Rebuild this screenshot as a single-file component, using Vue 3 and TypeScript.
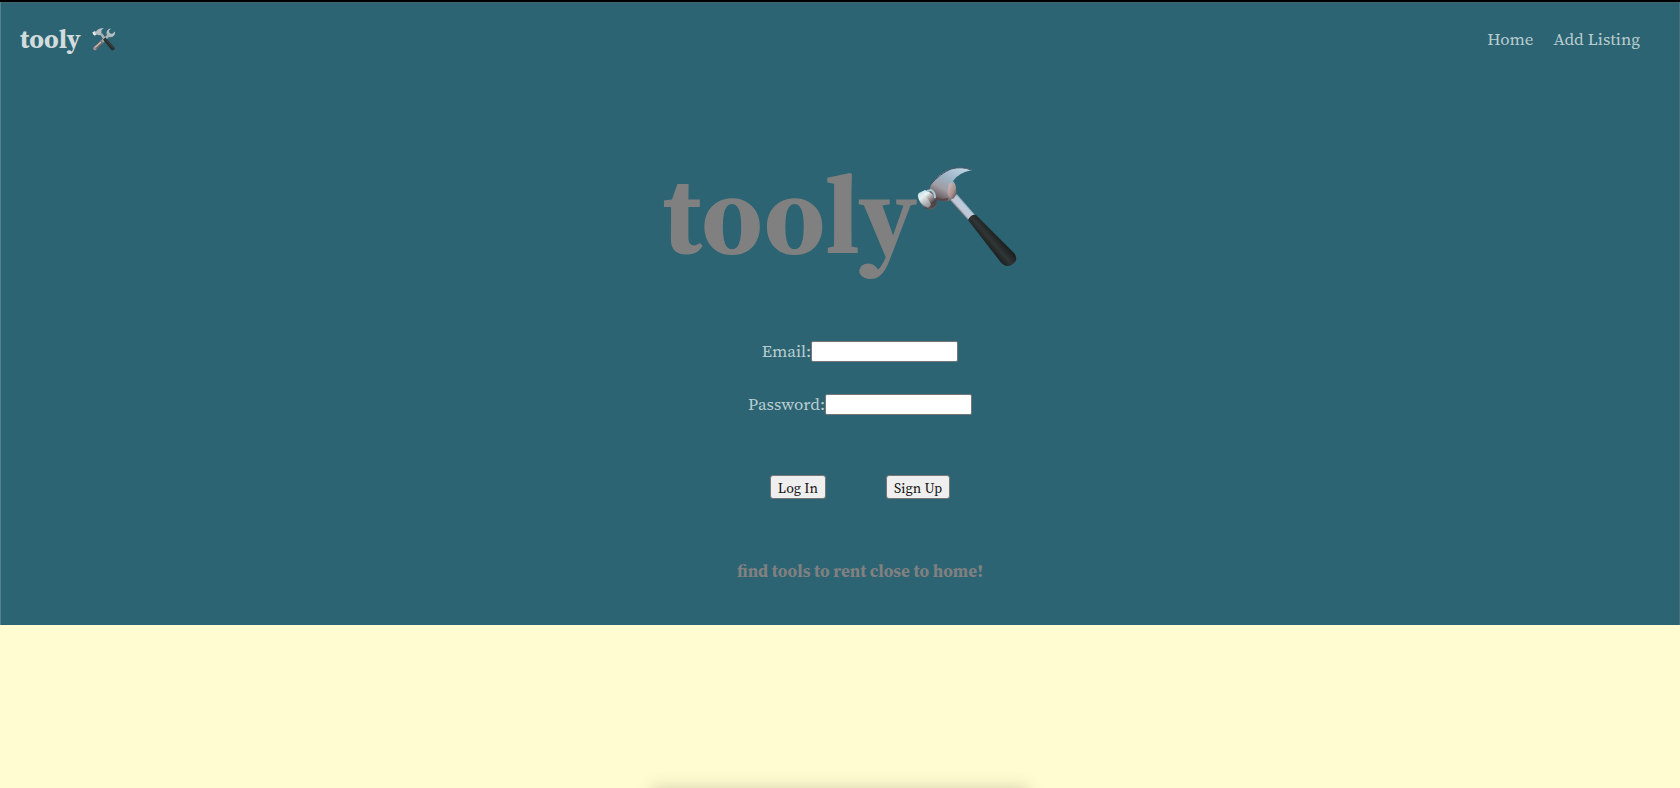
<script setup lang="ts">
import { ref } from 'vue'

interface NavLink {
  label: string
  href: string
}

const links: NavLink[] = [
  { label: 'Home', href: '#home' },
  { label: 'Add Listing', href: '#add-listing' },
]

const email = ref<string>('')
const password = ref<string>('')
</script>

<template>
  <div class="page">
    <div class="panel">
      <header class="bar">
        <a class="brand" href="#home">
          <span>tooly</span>
          <svg class="brand-icon" viewBox="0 0 48 48" aria-hidden="true">
            <defs>
              <linearGradient id="wrench" x1="1" y1="0" x2="0" y2="1">
                <stop offset="0" stop-color="#c3cdd2" />
                <stop offset="0.55" stop-color="#9aa5aa" />
                <stop offset="0.75" stop-color="#5c5553" />
                <stop offset="1" stop-color="#b5aca8" />
              </linearGradient>
            </defs>
            <path
              d="M38 3 C32 3 27 9 30 16 L3 40 Q1 43 4 46 Q7 48 10 44 L34 20 C41 22 47 17 46 9 L40 14 L35 12 L34 7 Z"
              fill="url(#wrench)"
            />
            <path d="M5 40 L18 28 L22 32 L9 44 Z" fill="#6d6260" />
            <path d="M6 41 L18 30" stroke="#c9c0bd" stroke-width="3" />
            <path d="M16 15 L20 12 L29 24 L25 28 Z" fill="#a9b2b5" />
            <path d="M22 25 L27 21 L45 41 Q47 44 43 46 Q40 48 38 45 Z" fill="#292d2e" />
            <path d="M27 24 L43 42" stroke="#4c5050" stroke-width="1.5" />
            <path
              d="M1 11 L5 8 L8 9 Q12 2 23 2 L23 3 Q18 5 19 10 L18 15 Q14 18 10 15 L6 17 Q2 16 1 11 Z"
              fill="#b4bdc1"
            />
            <path d="M1 11 L5 9 L8 15 L5 17 Q2 15 1 11 Z" fill="#e5eaec" />
          </svg>
        </a>
        <nav class="links">
          <a v-for="link in links" :key="link.label" :href="link.href">{{ link.label }}</a>
        </nav>
      </header>

      <main>
        <h1 class="hero">
          <span>tooly</span>
          <svg class="hammer" viewBox="0 0 100 100" aria-hidden="true">
            <defs>
              <linearGradient id="claw" x1="0.9" y1="0" x2="0.25" y2="1">
                <stop offset="0" stop-color="#c0d8e8" />
                <stop offset="0.45" stop-color="#9cb2c3" />
                <stop offset="0.7" stop-color="#a09ca3" />
                <stop offset="1" stop-color="#574a4d" />
              </linearGradient>
              <linearGradient id="face" x1="0" y1="0" x2="0.75" y2="1">
                <stop offset="0" stop-color="#a8d1dd" />
                <stop offset="0.35" stop-color="#edf4f5" />
                <stop offset="0.58" stop-color="#9c9297" />
                <stop offset="0.8" stop-color="#4b4144" />
                <stop offset="1" stop-color="#776b6c" />
              </linearGradient>
              <linearGradient id="neck" gradientUnits="userSpaceOnUse" x1="42" y1="46" x2="52" y2="37">
                <stop offset="0" stop-color="#4d4448" />
                <stop offset="0.3" stop-color="#c5c7d6" />
                <stop offset="0.7" stop-color="#b7cbdc" />
                <stop offset="1" stop-color="#38464e" />
              </linearGradient>
              <linearGradient id="collar" x1="0" y1="0" x2="1" y2="1">
                <stop offset="0" stop-color="#d1c1bd" />
                <stop offset="0.6" stop-color="#a78f8d" />
                <stop offset="1" stop-color="#4e4649" />
              </linearGradient>
              <linearGradient id="grip" gradientUnits="userSpaceOnUse" x1="66" y1="78" x2="80" y2="66">
                <stop offset="0" stop-color="#151819" />
                <stop offset="0.5" stop-color="#303536" />
                <stop offset="1" stop-color="#181c1d" />
              </linearGradient>
            </defs>
            <path d="M33 33 L40 27 L59 49 L52 54 Z" fill="url(#neck)" />
            <path
              d="M51 53 Q54 47 59 48 L97 86 Q101 91 98 95 Q93 101 87 98 Q84 96 82 93 Z"
              fill="url(#grip)"
            />
            <path
              d="M12 24 L14 18 Q23 5 34 2 Q46 -1 55 3 Q41 6 36 14 L38 17 Q41 27 35 32 Q28 37 21 32 L16 34 Z"
              fill="url(#claw)"
            />
            <path d="M32 17 Q37 14 39 21 Q40 29 36 32 Q29 30 31 22 Z" fill="url(#collar)" />
            <path d="M13 18 Q24 6 34 2 Q45 -1 54 3" fill="none" stroke="#43545f" />
            <path d="M18 31 Q24 34 31 32" fill="none" stroke="#5a4549" stroke-width="2" />
            <path
              d="M1 30 Q0 26 4 25 L8 23 Q14 25 19 31 Q22 38 17 41 Q12 44 8 41 Q3 37 1 30 Z"
              fill="url(#face)"
            />
            <path d="M2 29 L5 27 Q12 31 14 38 L11 41 Q3 37 2 29 Z" fill="#dce9ec" opacity="0.5" />
            <path d="M14 38 L18 32 Q21 37 18 40 L13 42 Z" fill="#4b4144" opacity="0.7" />
            <path d="M10 24 L14 23 Q18 25 18 31" fill="none" stroke="#a6c6d0" stroke-width="2" />
          </svg>
        </h1>

        <form class="login" @submit.prevent>
          <div class="field">
            <label for="email">Email:</label>
            <input id="email" v-model="email" type="email" autocomplete="email" />
          </div>
          <div class="field">
            <label for="password">Password:</label>
            <input id="password" v-model="password" type="password" autocomplete="current-password" />
          </div>
          <div class="actions">
            <button type="submit">Log In</button>
            <button type="button">Sign Up</button>
          </div>
          <h2 class="tagline">find tools to rent close to home!</h2>
        </form>
      </main>
    </div>
  </div>
</template>

<style>
body {
  margin: 0;
  background: #fffcd2;
}
</style>

<style scoped>
.page {
  position: relative;
  min-height: 100vh;
  overflow: hidden;
  background: #fffcd2;
  color: #b9cdd0;
  font-family: "Source Serif 4", "Source Serif Pro", "Liberation Serif", serif;
  font-size: 17px;
  line-height: 20px;
}

.page::after {
  content: "";
  position: absolute;
  top: 100%;
  left: 50%;
  width: 376px;
  height: 20px;
  transform: translateX(-50%);
  box-shadow: 0 0 16px rgba(90, 80, 50, 0.25);
}

.panel {
  box-sizing: border-box;
  padding-bottom: 42px;
  border-top: 2px solid #000;
  background: #2c6473;
  box-shadow: inset 1px 0 #55818c, inset -1px 0 #48727f, inset 0 1px #44656c;
}

.bar {
  display: flex;
  align-items: center;
  justify-content: space-between;
  padding: 19px 40px 21px 20px;
}

.brand {
  display: flex;
  align-items: center;
  gap: 11px;
  color: #d3dcdd;
  font-size: 26px;
  font-weight: 700;
  line-height: 36px;
  text-decoration: none;
}

.brand-icon {
  width: 24px;
  height: 24px;
}

.links {
  display: flex;
  gap: 20px;
}

.links a {
  color: inherit;
  text-decoration: none;
}

.hero {
  display: flex;
  justify-content: center;
  margin: 67px 0 56px;
  color: #808080;
  font-size: 109px;
  font-weight: 700;
  line-height: 140px;
}

.hammer {
  width: 100px;
  height: 100px;
  margin-top: 22px;
}

.login {
  display: flex;
  flex-direction: column;
  align-items: center;
  gap: 32px;
  padding-left: 40px;
}

.field {
  display: flex;
  align-items: flex-start;
}

.field input {
  box-sizing: border-box;
  width: 147px;
  height: 21px;
  padding: 1px 2px;
  border: 1px solid #767676;
  border-radius: 2px;
  background: #fff;
  color: #000;
  font: inherit;
  font-size: 14px;
}

.actions {
  display: flex;
  gap: 60px;
  margin: 28px 0;
}

.actions button {
  box-sizing: border-box;
  height: 24px;
  padding: 1px 7px 0;
  border: 1px solid #767676;
  border-radius: 3px;
  background: #efefef;
  color: #111;
  font: inherit;
  font-size: 14px;
  line-height: 20px;
}

.tagline {
  margin: 0;
  color: #808080;
  font-size: 17px;
  font-weight: 700;
  line-height: 24px;
}
</style>
